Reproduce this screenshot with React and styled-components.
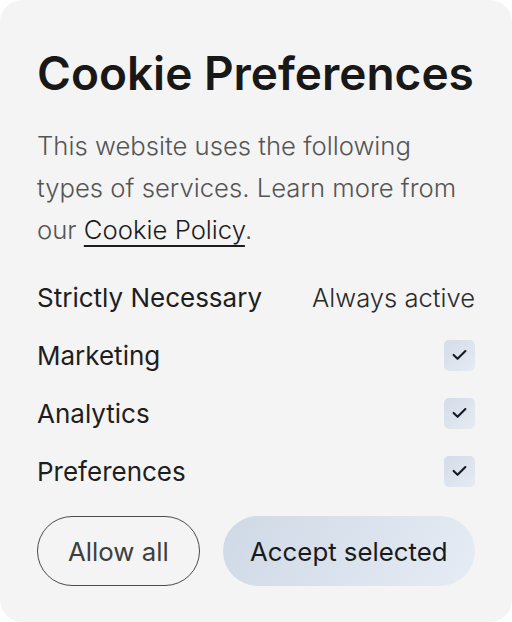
import React, { useState } from "react";
import styled, { createGlobalStyle } from "styled-components";

const GlobalStyle = createGlobalStyle`
  html, body {
    margin: 0;
    padding: 0;
    background: #ffffff;
  }
  body {
    font-family: Inter, "Noto Sans", sans-serif;
  }
`;

const Card = styled.div`
  box-sizing: border-box;
  width: 512px;
  height: 622px;
  background: #f4f4f4;
  border-radius: 22px;
  padding: 40px 37px 36px 37px;
  display: flex;
  flex-direction: column;
`;

const Title = styled.h1`
  margin: 0;
  font-size: 46px;
  font-weight: 600;
  letter-spacing: 0;
  color: #181818;
  line-height: 66px;
`;

const Description = styled.p`
  margin: 19px 0 0 0;
  font-size: 25.7px;
  font-weight: 300;
  line-height: 42px;
  color: #555555;
`;

const PolicyLink = styled.a`
  color: #1c1c1c;
  text-decoration: underline;
  text-decoration-thickness: 2px;
  text-underline-offset: 6px;
`;

const List = styled.div`
  display: flex;
  flex-direction: column;
  margin-top: 17px;
`;

const Row = styled.div`
  display: flex;
  align-items: center;
  justify-content: space-between;
  height: 58px;
`;

const Label = styled.span`
  font-size: 26px;
  font-weight: 400;
  color: #1e1e1e;
`;

const Status = styled.span`
  font-size: 25.6px;
  font-weight: 300;
  color: #2a2a2a;
`;

const Check = styled.button`
  box-sizing: border-box;
  width: 31px;
  height: 31px;
  padding: 0;
  border: none;
  border-radius: 5px;
  background: linear-gradient(135deg, #d3dce8 0%, #e6ebf3 100%);
  display: flex;
  align-items: center;
  justify-content: center;
  cursor: pointer;
`;

const Actions = styled.div`
  display: flex;
  gap: 23px;
  margin-top: auto;
`;

const Button = styled.button`
  box-sizing: border-box;
  height: 70px;
  border-radius: 35px;
  font-family: Inter, "Noto Sans", sans-serif;
  font-size: 25.8px;
  font-weight: 400;
  white-space: nowrap;
  cursor: pointer;
  padding: ${(p) => (p.primary ? "0 16px" : "0 30px")};
  border: ${(p) => (p.primary ? "none" : "1.5px solid #4a4a4a")};
  background: ${(p) =>
    p.primary
      ? "linear-gradient(120deg, #cfd9e5 0%, #dbe3ee 55%, #e6ecf4 100%)"
      : "transparent"};
  color: ${(p) => (p.primary ? "#1a1a1a" : "#3e3e3e")};
  flex: ${(p) => (p.primary ? "1" : "0 0 auto")};
`;

function CheckIcon() {
  return (
    <svg width="15" height="12" viewBox="0 0 14 11" fill="none">
      <path
        d="M1.5 5.5L5.2 9L12.5 1.8"
        stroke="#151b26"
        strokeWidth="2"
        strokeLinecap="round"
        strokeLinejoin="round"
      />
    </svg>
  );
}

export default function App() {
  const [prefs, setPrefs] = useState({
    Marketing: true,
    Analytics: true,
    Preferences: true,
  });

  const toggle = (key) => setPrefs({ ...prefs, [key]: !prefs[key] });

  return (
    <>
      <GlobalStyle />
      <Card>
        <Title>Cookie Preferences</Title>
        <Description>
          This website uses the following types of services. Learn more from
          our <PolicyLink href="#">Cookie Policy</PolicyLink>.
        </Description>
        <List>
          <Row>
            <Label>Strictly Necessary</Label>
            <Status>Always active</Status>
          </Row>
          {Object.keys(prefs).map((key) => (
            <Row key={key}>
              <Label>{key}</Label>
              <Check onClick={() => toggle(key)} aria-label={key}>
                {prefs[key] && <CheckIcon />}
              </Check>
            </Row>
          ))}
        </List>
        <Actions>
          <Button>Allow all</Button>
          <Button primary>Accept selected</Button>
        </Actions>
      </Card>
    </>
  );
}
